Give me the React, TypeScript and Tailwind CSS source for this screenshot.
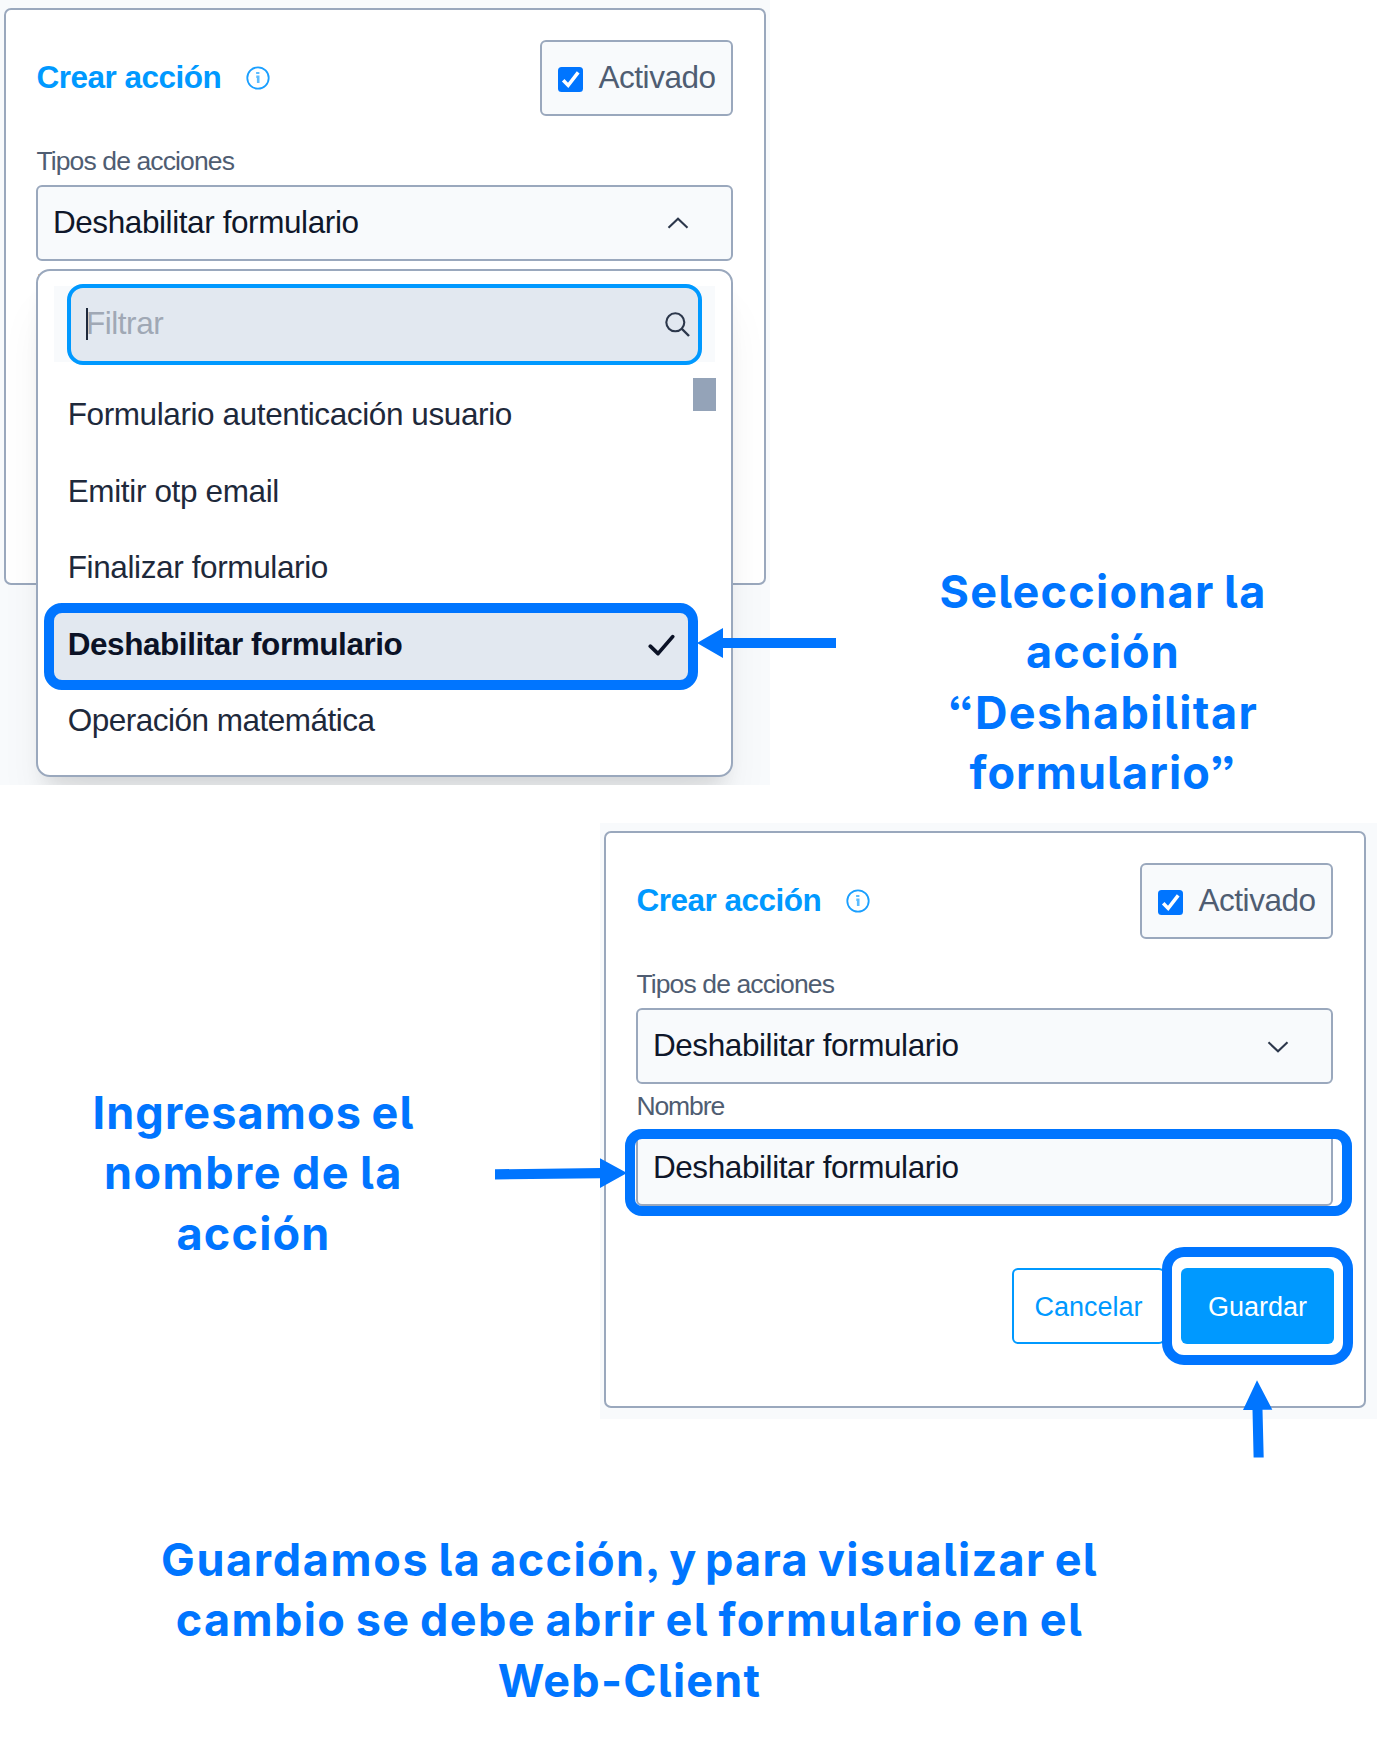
import type { ReactNode } from "react";

function InfoIcon() {
  return (
    <svg className="h-[24px] w-[24px] shrink-0" viewBox="0 0 24 24" fill="none">
      <circle cx="12" cy="12" r="10.7" stroke="#1a9fff" strokeWidth="1.8" />
      <path d="M10.1 7H13.4" stroke="#5cbcff" strokeWidth="2" />
      <path d="M10.3 10.8H12.2V17" stroke="#5cbcff" strokeWidth="2.6" />
    </svg>
  );
}

function CheckBox() {
  return (
    <svg className="h-[25px] w-[25px] shrink-0" viewBox="0 0 25 25" fill="none">
      <rect width="25" height="25" rx="3.5" fill="#0075ff" />
      <path d="M5.2 13.2L10.2 18.4L20.2 5.4" stroke="#fff" strokeWidth="3.5" />
    </svg>
  );
}

function Chevron({ open }: { open?: boolean }) {
  return (
    <svg className="h-[12px] w-[22px] shrink-0" viewBox="0 0 22 12" fill="none">
      <path d={open ? "M1.5 10.7L11 1.7L20.5 10.7" : "M1.5 1.3L11 10.3L20.5 1.3"} stroke="#2c374b" strokeWidth="2.1" />
    </svg>
  );
}

function Select({ open }: { open?: boolean }) {
  return (
    <div className="flex h-[76.5px] items-center justify-between rounded-[6px] border-2 border-[#9aa8bd] bg-[#f8fafc] pr-[42px] pl-[14.5px]">
      <span className="pb-[1px] text-[31.5px] leading-[40px] tracking-[-0.41px] text-[#0f172a]">Deshabilitar formulario</span>
      <div className={open ? "flex" : "mt-[2px] flex"}>
        <Chevron open={open} />
      </div>
    </div>
  );
}

function Label({ children }: { children: ReactNode }) {
  return <div className="h-[24px] text-[26.5px] leading-[24px] text-[#4f5d72]">{children}</div>;
}

function Card({ open, children }: { open?: boolean; children?: ReactNode }) {
  return (
    <div className="h-[577px] w-[762px] rounded-[7px] border-2 border-[#9aa8bd] bg-white px-[30.5px] pt-[30px]">
      <div className="flex h-[76.5px] items-center">
        <h2 className="pb-[2px] text-[31.5px] leading-[40px] font-bold tracking-[-0.49px] text-[#0099ff]">Crear acción</h2>
        <div className="ml-[25px] flex">
          <InfoIcon />
        </div>
        <div className="ml-auto flex h-full w-[193px] items-center rounded-[6px] border-2 border-[#9aa8bd] bg-[#f8fafc] pl-[15.7px]">
          <div className="mt-[3px]">
            <CheckBox />
          </div>
          <span className="ml-[15.3px] pb-[1px] text-[31.5px] leading-[40px] tracking-[-0.44px] text-[#4f5d72]">Activado</span>
        </div>
      </div>
      <div className="mt-[32.5px] mb-[12px] tracking-[-0.88px]">
        <Label>Tipos de acciones</Label>
      </div>
      <Select open={open} />
      <div className="mt-[9.5px] mb-[12px] tracking-[-1.1px]">
        <Label>Nombre</Label>
      </div>
      {children}
    </div>
  );
}

function Dropdown() {
  return (
    <div className="absolute top-[269.4px] left-[36.4px] h-[508px] w-[697px] rounded-[14px] border-2 border-[#9aa8bd] bg-white px-[16px] pt-[14.5px] text-[31.5px] text-[#1e293b] shadow-[0_38px_48px_-10px_rgba(0,0,0,0.08),0_15px_19px_-9px_rgba(0,0,0,0.1)]">
      <div className="flex h-[76.5px] items-center bg-[#f8fafc] px-[13px]">
        <div className="-my-[2px] flex h-[81px] w-full items-center rounded-[16px] border-4 border-[#0099ff] bg-[#e2e8f0] pr-[8px] pl-[15px]">
          <div className="h-[32px] w-[2px] bg-[#1e293b]" />
          <span className="-ml-[2.5px] pb-[2px] leading-[40px] tracking-[-0.44px] text-[#a0a8b5]">Filtrar</span>
          <svg className="ml-auto h-[25px] w-[25px]" viewBox="0 0 25 25" fill="none">
            <circle cx="10.3" cy="10.3" r="9" stroke="#2c374b" strokeWidth="2.1" />
            <path d="M16.5 16.5L24 24" stroke="#2c374b" strokeWidth="2.4" />
          </svg>
        </div>
      </div>
      <div className="mt-[15px] flex justify-between">
        <ul className="w-[634px] leading-[75.2px]">
          <li className="h-[76.4px] pl-[13.3px] tracking-[-0.4px]">Formulario autenticación usuario</li>
          <li className="h-[76.4px] pl-[13.3px] tracking-[-0.36px]">Emitir otp email</li>
          <li className="h-[76.4px] pl-[13.3px] tracking-[-0.38px]">Finalizar formulario</li>
          <li className="relative flex h-[76.4px] items-center justify-between bg-[#e2e8f0] pr-[13px] pl-[13.3px] font-bold tracking-[-0.44px] text-[#0b1226]">
            <span>Deshabilitar formulario</span>
            <svg className="h-[22px] w-[27px]" viewBox="0 0 27 22" fill="none">
              <path d="M2.3 12.2L10 19.6L24.7 2.6" stroke="#0b1226" strokeWidth="3.7" strokeLinecap="round" strokeLinejoin="round" />
            </svg>
            <div className="absolute -top-[4px] -left-[10.4px] h-[87px] w-[654px] rounded-[18px] border-10 border-[#0075ff]" />
          </li>
          <li className="h-[76.4px] pl-[13.3px] tracking-[-0.5px]">Operación matemática</li>
        </ul>
        <div className="mt-[1px] -mr-[1px] h-[33px] w-[23px] bg-[#94a3b8]" />
      </div>
    </div>
  );
}

function Line({ className, children }: { className: string; children: ReactNode }) {
  return (
    <div className={className}>
      <span className="whitespace-nowrap">{children}</span>
    </div>
  );
}

const noteStyle =
  "text-center font-['Inter',sans-serif] text-[45px] leading-[60.5px] font-bold text-[#0075ff] [font-feature-settings:'cv05','ss03']";

export default function App() {
  return (
    <main className="relative h-[1742px] w-[1377px] overflow-hidden bg-white font-['Liberation_Sans',Arial,sans-serif]">
      <section className="flex h-[785px]">
        <div className="relative h-[785px] w-[770px] shrink-0 overflow-hidden bg-[#f8fafc] pt-[7.5px] pl-[3.9px]">
          <Card open />
          <Dropdown />
        </div>
        <div className={`ml-[133px] w-[400px] pt-[561.6px] ${noteStyle}`}>
          <Line className="tracking-[1.25px] [word-spacing:-2.4px]">Seleccionar la</Line>
          <Line className="tracking-[1.18px]">acción</Line>
          <Line className="tracking-[1.4px]">“Deshabilitar</Line>
          <Line className="tracking-[1.07px]">formulario”</Line>
        </div>
      </section>

      <section className="mt-[38px] flex h-[596px]">
        <div className={`w-[507px] shrink-0 pt-[259.5px] ${noteStyle}`}>
          <Line className="tracking-[1.15px] [word-spacing:-2.4px]">Ingresamos el</Line>
          <Line className="tracking-[1.5px] [word-spacing:-2.3px]">nombre de la</Line>
          <Line className="tracking-[1.18px]">acción</Line>
        </div>
        <div className="ml-[93px] h-[596px] w-[777px] bg-[#f8fafc] pt-[7.5px] pl-[3.9px]">
          <Card>
            <div className="relative flex h-[76.5px] items-center rounded-[6px] border-2 border-[#9aa8bd] bg-[#f8fafc] pl-[14.5px]">
              <span className="pb-[1px] text-[31.5px] leading-[40px] tracking-[-0.41px] text-[#0f172a]">Deshabilitar formulario</span>
              <div className="absolute -top-[3px] -left-[13.4px] h-[87px] w-[727px] rounded-[17px] border-10 border-[#0075ff]" />
            </div>
            <div className="mt-[61.5px] -mr-[0.7px] flex h-[76.5px] justify-end gap-[16px] text-[27px]">
              <button className="flex w-[153px] items-center justify-center rounded-[6px] border-2 border-[#0099ff] bg-white pt-[2px] text-[#0099ff]">Cancelar</button>
              <button className="relative flex w-[153px] items-center justify-center rounded-[6px] bg-[#0099ff] pt-[2px] text-white">
                Guardar
                <div className="absolute -top-[21px] -left-[19.3px] h-[118px] w-[191px] rounded-[22px] border-10 border-[#0075ff]" />
              </button>
            </div>
          </Card>
        </div>
      </section>

      <section className={`mt-[110.5px] w-[1259px] ${noteStyle}`}>
        <Line className="tracking-[1.28px] [word-spacing:-2.8px]">
          <span className="tracking-[1.65px]">Guardamos</span> la <span className="tracking-[1.4px]">acción,</span>
          <span className="[word-spacing:-4.6px]"> y para</span> visualizar el
        </Line>
        <Line className="tracking-[1.4px] [word-spacing:-2.6px]">cambio se debe abrir el formulario en el</Line>
        <Line className="tracking-[1.23px]">Web-Client</Line>
      </section>

      <svg className="absolute top-[628px] left-[697px] h-[30px] w-[139px]" viewBox="0 0 139 30" fill="#0075ff">
        <path d="M0 15L26 0V10H139V20H26V30Z" />
      </svg>
      <svg className="absolute top-[1158px] left-[495px] h-[31px] w-[132px]" viewBox="0 0 132 31" fill="#0075ff">
        <path d="M132 15L105 30V20.2L0 21.5V11.3L105 10V0.3Z" />
      </svg>
      <svg className="absolute top-[1380px] left-[1243px] h-[78px] w-[30px]" viewBox="0 0 30 78" fill="#0075ff">
        <path d="M14 0.3L29.3 29.7H19.5L20.7 77.5H10.6L9.5 30H0Z" />
      </svg>
    </main>
  );
}
